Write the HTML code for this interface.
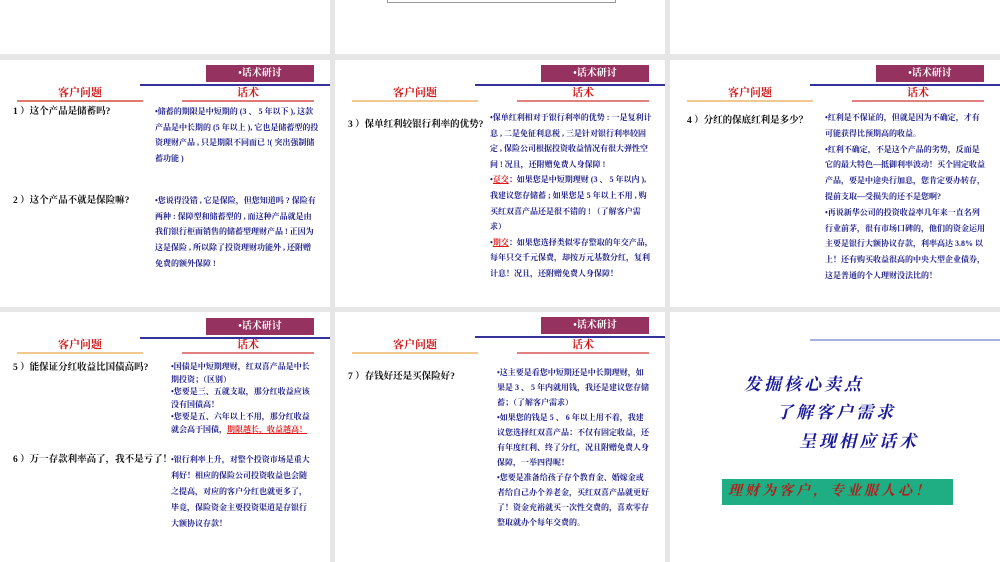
<!DOCTYPE html>
<html><head><meta charset="utf-8">
<style>
*{margin:0;padding:0;box-sizing:border-box}
body{width:1000px;height:556px;background:#e6e6e6;position:relative;overflow:hidden;font-family:"Liberation Serif","Noto Serif CJK SC","Noto Sans CJK SC",serif}
.s{position:absolute;background:#fff;overflow:hidden}
.pb{position:absolute;left:206px;width:108px;height:17px;background:#96325f;color:#fff;font-size:10px;text-align:center;line-height:17px;font-weight:bold}
.bl{position:absolute;left:140px;right:0;height:2px;background:#333399}
.h{position:absolute;color:#d01818;font-size:11px;font-weight:bold;text-align:center;line-height:14px}
.ul{position:absolute;height:1.5px}
.q{position:absolute;left:13px;font-size:9.5px;font-weight:bold;color:#111;white-space:nowrap;line-height:12px}
.a{position:absolute;left:155px;font-size:8px;font-weight:bold;color:#1c1c8a;white-space:nowrap}
.r{color:#e01818;text-decoration:underline}
.big{position:absolute;font-size:17px;font-weight:bold;font-style:italic;color:#1a1a99;letter-spacing:3px;white-space:nowrap}
</style></head><body>

<div class="s" style="left:0;top:0;width:330px;height:54px"></div>
<div class="s" style="left:335px;top:0;width:330px;height:54px"><div style="position:absolute;left:52px;top:-2px;width:229px;height:5px;border:1px solid #999"></div></div>
<div class="s" style="left:670px;top:0;width:330px;height:54px"></div>

<div class="s" style="left:0;top:60px;width:330px;height:247px">
 <div class="pb" style="top:5px">•话术研讨</div><div class="bl" style="top:24px"></div>
 <div class="h" style="left:17px;width:126px;top:26px">客户问题</div>
 <div class="ul" style="left:17px;width:126px;top:40px;background:#e07a6a"></div>
 <div class="h" style="left:182px;width:132px;top:26px">话术</div>
 <div class="ul" style="left:182px;width:132px;top:40px;background:#e07a7a"></div>
 <div class="q" style="top:46px">1 ）这个产品是储蓄吗?</div>
 <div class="a" style="top:44px;line-height:15.5px">•储蓄的期限是中短期的 (3 、 5 年以下 ), 这款<br>产品是中长期的 (5 年以上 ), 它也是储蓄型的投<br>资理财产品 , 只是期限不同而已 !( 突出强制储<br>蓄功能 )</div>
 <div class="q" style="top:135px">2 ）这个产品不就是保险嘛?</div>
 <div class="a" style="top:133px;line-height:15.7px">•您说得没错 , 它是保险，但您知道吗 ? 保险有<br>两种 : 保障型和储蓄型的 , 而这种产品就是由<br>我们银行柜面销售的储蓄型理财产品 ! 正因为<br>这是保险 , 所以除了投资理财功能外 , 还附赠<br>免费的额外保障 !</div>
</div>

<div class="s" style="left:335px;top:60px;width:330px;height:247px">
 <div class="pb" style="top:5px">•话术研讨</div><div class="bl" style="top:24px"></div>
 <div class="h" style="left:17px;width:126px;top:26px">客户问题</div>
 <div class="ul" style="left:17px;width:126px;top:40px;background:#f0c890"></div>
 <div class="h" style="left:182px;width:132px;top:26px">话术</div>
 <div class="ul" style="left:182px;width:132px;top:40px;background:#e08080"></div>
 <div class="q" style="top:59px">3 ）保单红利较银行利率的优势?</div>
 <div class="a" style="top:50px;line-height:15.6px">•保单红利相对于银行利率的优势 : 一是复利计<br>息 , 二是免征利息税 , 三是针对银行利率较固<br>定 , 保险公司根据投资收益情况有很大弹性空<br>间 ! 况且，还附赠免费人身保障 !<br>•<span class="r">趸交</span>：如果您是中短期理财 (3 、 5 年以内 ),<br>我建议您存储蓄 ; 如果您是 5 年以上不用 , 购<br>买红双喜产品还是很不错的 ! （了解客户需<br>求）<br>•<span class="r">期交</span>：如果您选择类似零存整取的年交产品，<br>每年只交千元保费，却按万元基数分红，复利<br>计息！况且，还附赠免费人身保障！</div>
</div>

<div class="s" style="left:670px;top:60px;width:330px;height:247px">
 <div class="pb" style="top:5px">•话术研讨</div><div class="bl" style="top:24px"></div>
 <div class="h" style="left:17px;width:126px;top:26px">客户问题</div>
 <div class="ul" style="left:17px;width:126px;top:40px;background:#f0c890"></div>
 <div class="h" style="left:182px;width:132px;top:26px">话术</div>
 <div class="ul" style="left:182px;width:132px;top:40px;background:#e08080"></div>
 <div class="q" style="top:55px;left:17px">4 ）分红的保底红利是多少？</div>
 <div class="a" style="top:50px;line-height:15.8px">•红利是不保证的，但就是因为不确定，才有<br>可能获得比预期高的收益。<br>•红利不确定，不是这个产品的劣势，反而是<br>它的最大特色—抵御利率波动！买个固定收益<br>产品，要是中途央行加息，您肯定要办转存，<br>提前支取—受损失的还不是您啊?<br>•再说新华公司的投资收益率几年来一直名列<br>行业前茅，很有市场口碑的，他们的资金运用<br>主要是银行大额协议存款，利率高达 3.8% 以<br>上！还有购买收益很高的中央大型企业债券，<br>这是普通的个人理财没法比的！</div>
</div>

<div class="s" style="left:0;top:312px;width:330px;height:250px">
 <div class="pb" style="top:6px">•话术研讨</div><div class="bl" style="top:25px"></div>
 <div class="h" style="left:17px;width:126px;top:26px">客户问题</div>
 <div class="ul" style="left:17px;width:126px;top:40px;background:#f0c890"></div>
 <div class="h" style="left:182px;width:132px;top:26px">话术</div>
 <div class="ul" style="left:182px;width:132px;top:40px;background:#e08080"></div>
 <div class="q" style="top:50px">5 ）能保证分红收益比国债高吗?</div>
 <div class="a" style="top:49px;left:171px;line-height:12.6px">•国债是中短期理财，红双喜产品是中长<br>期投资；（区别）<br>•您要是三、五就支取，那分红收益应该<br>没有国债高！<br>•您要是五、六年以上不用，那分红收益<br>就会高于国债，<span class="r">期限越长，收益越高！</span></div>
 <div class="q" style="top:142px">6 ）万一存款利率高了，我不是亏了！</div>
 <div class="a" style="top:140px;left:171px;line-height:16px">•银行利率上升，对整个投资市场是重大<br>利好！相应的保险公司投资收益也会随<br>之提高，对应的客户分红也就更多了，<br>毕竟，保险资金主要投资渠道是存银行<br>大额协议存款！</div>
</div>

<div class="s" style="left:335px;top:312px;width:330px;height:250px">
 <div class="pb" style="top:5px">•话术研讨</div><div class="bl" style="top:24px"></div>
 <div class="h" style="left:17px;width:126px;top:26px">客户问题</div>
 <div class="ul" style="left:17px;width:126px;top:40px;background:#f0c890"></div>
 <div class="h" style="left:182px;width:132px;top:26px">话术</div>
 <div class="ul" style="left:182px;width:132px;top:40px;background:#e08080"></div>
 <div class="q" style="top:59px">7 ）存钱好还是买保险好?</div>
 <div class="a" style="top:53px;left:162px;line-height:15px">•这主要是看您中短期还是中长期理财，如<br>果是 3 、 5 年内就用钱，我还是建议您存储<br>蓄；（了解客户需求）<br>•如果您的钱是 5 、 6 年以上用不着，我建<br>议您选择红双喜产品：不仅有固定收益，还<br>有年度红利、终了分红，况且附赠免费人身<br>保障，一举四得呢！<br>•您要是准备给孩子存个教育金、婚嫁金或<br>者给自己办个养老金，买红双喜产品就更好<br>了！资金充裕就买一次性交费的，喜欢零存<br>整取就办个每年交费的。</div>
</div>

<div class="s" style="left:670px;top:312px;width:330px;height:250px">
 <div style="position:absolute;left:140px;right:0;top:27px;height:1.5px;background:#aab0e0"></div>
 <div class="big" style="left:74px;top:58px">发掘核心卖点</div>
 <div class="big" style="left:106px;top:86px">了解客户需求</div>
 <div class="big" style="left:129px;top:115px">呈现相应话术</div>
 <div style="position:absolute;left:52px;top:167px;width:231px;height:26px;background:#1fae84;color:#b0201a;font-size:14px;font-weight:bold;font-style:italic;line-height:26px;padding-left:6px;letter-spacing:3px;white-space:nowrap">理财为客户，专业服人心！</div>
</div>

</body></html>
